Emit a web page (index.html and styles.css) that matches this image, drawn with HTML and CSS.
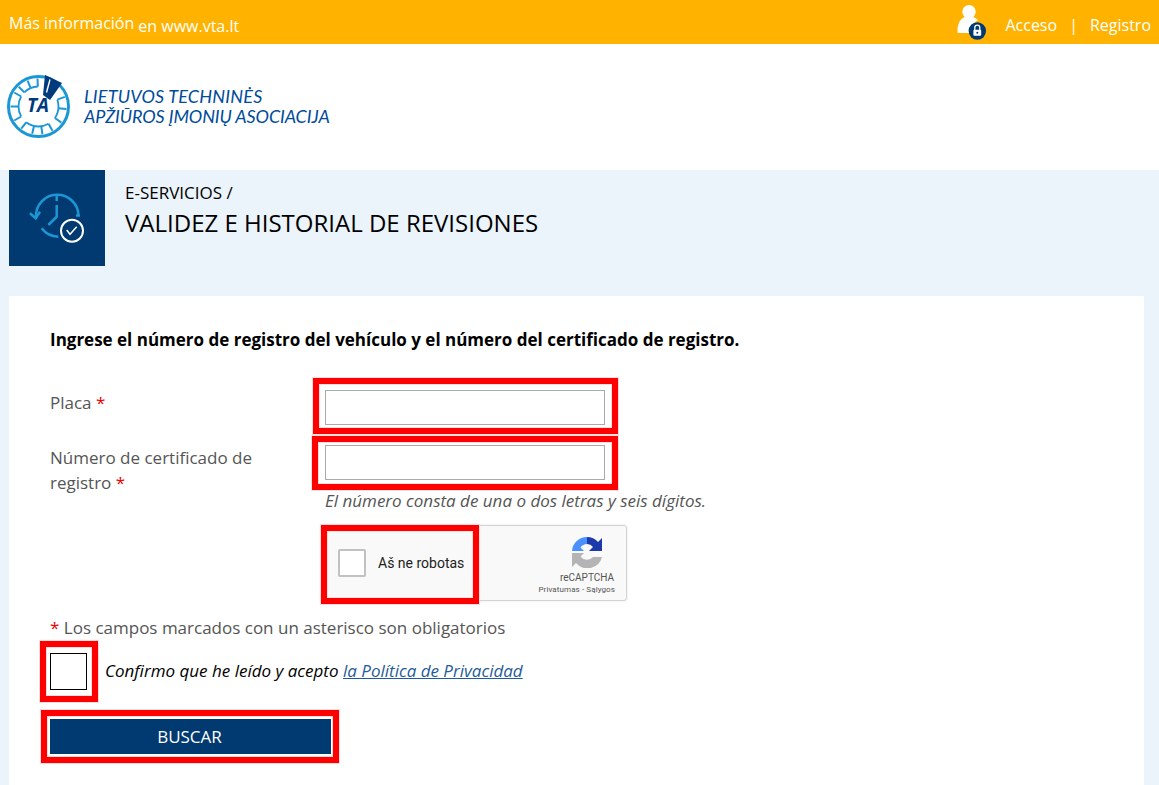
FILE: index.html
```html
<!DOCTYPE html>
<html lang="es">
<head>
<meta charset="utf-8">
<title>Validez e historial de revisiones</title>
<link rel="stylesheet" href="styles.css">
</head>
<body>
<header class="topbar">
  <div class="topbar-info"><span>Más información</span><a class="topbar-link" href="#">en www.vta.lt</a></div>
  <nav class="topbar-nav">
    <svg class="user-icon" width="30" height="44" viewBox="0 0 30 44" aria-hidden="true">
      <circle cx="12" cy="11.700" r="6.700" fill="#fff"/>
      <path d="M.6 33c-.5-8 2-14 7-16 2.700 1.500 6 1.500 8.700 0 2 .8 3.500 1.800 4.700 3.300-3.700 1.500-6.300 5-6.300 9 0 1.300.2 2.500.6 3.700z" fill="#fff"/>
      <circle cx="20.300" cy="31" r="8.700" fill="#003a70"/>
      <path d="M17.800 30v-2.300a2.500 2.500 0 0 1 5 0V30" fill="none" stroke="#fff" stroke-width="1.300"/>
      <rect x="16.400" y="29.800" width="7.800" height="6" rx="1" fill="#fff"/>
      <circle cx="20.300" cy="32.700" r="1" fill="#003a70"/>
    </svg>
    <a href="#">Acceso</a>
    <span class="sep">|</span>
    <a href="#">Registro</a>
  </nav>
</header>

<div class="brand">
  <svg class="logo" width="64" height="64" viewBox="0 0 64 64" aria-hidden="true">
    <circle cx="31.500" cy="31.500" r="30" fill="none" stroke="#1b97d6" stroke-width="3"/>
    <circle cx="31.500" cy="31.500" r="20" fill="none" stroke="#1b97d6" stroke-width="1.800" pathLength="360" stroke-dasharray="35 25 68 22 60 15 43 72 20 0"/>
    <g stroke="#1b97d6" stroke-width="2">
      <path d="M31.500 11.500V3.500" transform="rotate(70 31.500 31.500)"/>
      <path d="M31.500 11.500V3.500" transform="rotate(95 31.500 31.500)"/>
      <path d="M31.500 11.500V3.500" transform="rotate(125 31.500 31.500)"/>
      <path d="M31.500 11.500V3.500" transform="rotate(150 31.500 31.500)"/>
      <path d="M31.500 11.500V3.500" transform="rotate(172 31.500 31.500)"/>
      <path d="M31.500 11.500V3.500" transform="rotate(193 31.500 31.500)"/>
      <path d="M31.500 11.500V3.500" transform="rotate(218 31.500 31.500)"/>
      <path d="M31.500 11.500V3.500" transform="rotate(240 31.500 31.500)"/>
      <path d="M31.500 11.500V3.500" transform="rotate(270 31.500 31.500)"/>
      <path d="M31.500 11.500V3.500" transform="rotate(300 31.500 31.500)"/>
      <path d="M31.500 11.500V3.500" transform="rotate(315 31.500 31.500)"/>
      <path d="M31.500 11.500V3.500" transform="rotate(337 31.500 31.500)"/>
      <path d="M31.500 11.500V3.500" transform="rotate(358 31.500 31.500)"/>
    </g>
    <path d="M38 0L55 8 43 25 36 20z" fill="#003a7d"/>
    <path d="M43 4.500L39.500 17.500" stroke="#fff" stroke-width="1.400"/>
    <text class="logo-mark" x="20" y="37">TA</text>
  </svg>
  <div class="brand-text"><span class="brand-line-one">LIETUVOS TECHNINĖS</span><span class="brand-line-two">APŽIŪROS ĮMONIŲ ASOCIACIJA</span></div>
</div>

<main class="content">
  <section class="page-head">
    <div class="head-tile">
      <svg width="96" height="96" viewBox="0 0 96 96" aria-hidden="true">
        <g fill="none" stroke="#1b97d6" stroke-width="2.500">
          <path d="M27 47A21 21 0 0 1 69.500 45"/>
          <path d="M21 43.300l5.700 5 4.300-6.600"/>
          <path d="M32.700 58.300A21 21 0 0 0 49.300 66.700"/>
          <path d="M47.700 26v5M47.700 35v11.700L39.300 55M67 45.500h4"/>
        </g>
        <circle cx="63" cy="60.700" r="11" fill="#003a70" stroke="#fff" stroke-width="2"/>
        <path d="M57.700 60l3.300 4.300 6.700-7.600" fill="none" stroke="#fff" stroke-width="1.400"/>
      </svg>
    </div>
    <div class="head-titles">
      <div class="crumb">E-SERVICIOS /</div>
      <h1>VALIDEZ E HISTORIAL DE REVISIONES</h1>
    </div>
  </section>

  <section class="card">
    <p class="lead">Ingrese el número de registro del vehículo y el número del certificado de registro.</p>

    <div class="field field-plate">
      <label class="field-label">Placa <span class="req">*</span></label>
      <div class="control"><input type="text" class="input"><span class="mark mark-plate"></span></div>
    </div>

    <div class="field field-cert">
      <label class="field-label">Número de certificado de registro <span class="req">*</span></label>
      <div class="control">
        <input type="text" class="input"><span class="mark mark-cert"></span>
        <p class="hint">El número consta de una o dos letras y seis dígitos.</p>
      </div>
    </div>

    <div class="captcha">
      <span class="captcha-box"></span>
      <span class="captcha-text">Aš ne robotas</span>
      <div class="captcha-brand">
        <svg width="32" height="32" viewBox="0 0 32 32" aria-hidden="true">
          <path d="M1 15A15 15 0 0 1 16 1V8A8 8 0 0 0 9.500 11.500L13 15z" fill="#4a90ff"/>
          <path d="M16 1A15 15 0 0 1 27 6L31 2V15H18L22 11A8 8 0 0 0 16 8z" fill="#1c3aa9"/>
          <path d="M1 17H13L9.500 20.500A8 8 0 0 0 22 21H31A15 15 0 0 1 5 27L1 31z" fill="#b4b4b4"/>
        </svg>
        <span class="captcha-name">reCAPTCHA</span>
        <span class="captcha-links">Privatumas - Sąlygos</span>
      </div>
      <span class="mark mark-captcha"></span>
    </div>

    <p class="required-note"><span class="req">*</span> Los campos marcados con un asterisco son obligatorios</p>

    <div class="consent">
      <span class="consent-check"><span class="mark mark-check"></span></span>
      <span class="consent-text">Confirmo que he leído y acepto <a href="#">la Política de Privacidad</a></span>
    </div>

    <div class="actions">
      <button class="submit" type="button">BUSCAR</button>
      <span class="mark mark-submit"></span>
    </div>
  </section>
</main>
</body>
</html>
```
FILE: styles.css
```css
* { box-sizing: border-box; }
html, body { margin: 0; height: 785px; overflow: hidden; }
body { font-family: "Open Sans", sans-serif; font-size: 17px; background: #fff; color: #000; }

.topbar { height: 44px; background: #ffb300; color: #fff; display: flex; justify-content: space-between; padding: 0 8px 0 9px; font-size: 16px; }
.topbar a { color: #fff; text-decoration: none; }
.topbar-info { display: flex; align-items: flex-start; padding-top: 12px; line-height: 22px; }
.topbar-link { margin: 3px 0 0 4px; }
.topbar-nav { display: flex; align-items: center; line-height: 22px; }
.topbar-nav a { padding-top: 6px; }
.sep { padding-top: 6px; margin: 0 12px; }
.user-icon { margin-right: 18px; }

.brand { height: 126px; padding: 31px 0 0 7px; display: flex; }
.logo { flex: none; }
.logo-mark { font: italic 700 19px "Open Sans", sans-serif; fill: #003a7d; }
.brand-text { margin: 11px 0 0 13px; font: italic 400 18px/20px "Lato", sans-serif; color: #004b9b; white-space: nowrap; }
.brand-line-one, .brand-line-two { display: block; }
.brand-line-one { letter-spacing: .2px; }
.brand-line-two { letter-spacing: -.1px; }

.content { background: #ebf3fb; height: 615px; padding: 0 15px 0 9px; }
.page-head { height: 126px; display: flex; }
.head-tile { width: 96px; height: 96px; background: #003a70; }
.head-tile svg { display: block; }
.head-titles { padding: 11px 0 0 20px; }
.crumb { line-height: 24px; }
h1 { margin: 2px 0 0; font-size: 24px; font-weight: 400; line-height: 32px; }

.card { background: #fff; height: 489px; padding: 33px 41px 0; color: #555; }
.lead { margin: 0 0 39px; line-height: 22px; font-weight: 700; color: #000; }

.field { display: flex; align-items: flex-start; }
.field-label { width: 275px; padding-right: 20px; line-height: 25px; flex: none; }
.field-plate { height: 55px; }
.field-cert { height: 80px; }
.req { color: #e00; font-weight: 400; }
.control { position: relative; }
.input { display: block; width: 280px; height: 35px; border: 1px solid #aaa; background: #fff; padding: 0 8px; margin: 0; }
.hint { margin: 9px 0 0; font-style: italic; line-height: 24px; white-space: nowrap; }

.mark { position: absolute; border: 6px solid #f00; box-shadow: 0 0 0 1px #fdd, inset 0 0 0 1px #fdd; pointer-events: none; }
.mark-plate { left: -12px; top: -12px; width: 305px; height: 56px; }
.mark-cert { left: -13px; top: -9px; width: 306px; height: 54px; }
.mark-captcha { left: 0; top: 0; width: 158px; height: 79px; }
.mark-check { left: -10px; top: -12px; width: 58px; height: 61px; }
.mark-submit { left: -9px; top: -9px; width: 298px; height: 53px; }

.captcha { position: relative; margin: 0 0 0 271px; width: 306px; height: 76px; background: #f9f9f9; border: 1px solid #d3d3d3; border-radius: 3px; display: flex; align-items: center; font-family: Roboto, sans-serif; box-shadow: 0 0 3px #e8e8e8; }
.captcha .mark { left: -1px; top: -1px; }
.captcha-box { width: 28px; height: 28px; margin-left: 16px; background: #fff; border: 2px solid #c1c1c1; border-radius: 2px; flex: none; }
.captcha-text { margin-left: 12px; font-size: 14px; color: #222; white-space: nowrap; }
.captcha-brand { margin-left: auto; width: 72px; margin-right: 3px; display: flex; flex-direction: column; align-items: center; color: #555; padding-top: 6px; }
.captcha-name { font-size: 10px; line-height: 13px; margin-top: 3px; }
.captcha-links { align-self: flex-end; margin-right: 8px; font-size: 8px; line-height: 12px; white-space: nowrap; letter-spacing: .1px; }

.required-note { margin: 15px 0 0; line-height: 24px; }
.consent { display: flex; align-items: center; margin-top: 13px; height: 37px; }
.consent-check { position: relative; width: 37px; height: 37px; border: 1px solid #000; background: #fff; flex: none; }
.consent-check .mark-check { left: -11px; top: -13px; }
.consent-text { margin: -2px 0 0 18px; font-style: italic; color: #000; }
.consent-text a { color: #1f5c99; }

.actions { position: relative; margin-top: 29px; width: 281px; }
.submit { display: block; width: 281px; height: 35px; background: #003a70; color: #fff; border: 0; padding: 0 2px 0 0; font: 500 17px "Open Sans", sans-serif; }
```
